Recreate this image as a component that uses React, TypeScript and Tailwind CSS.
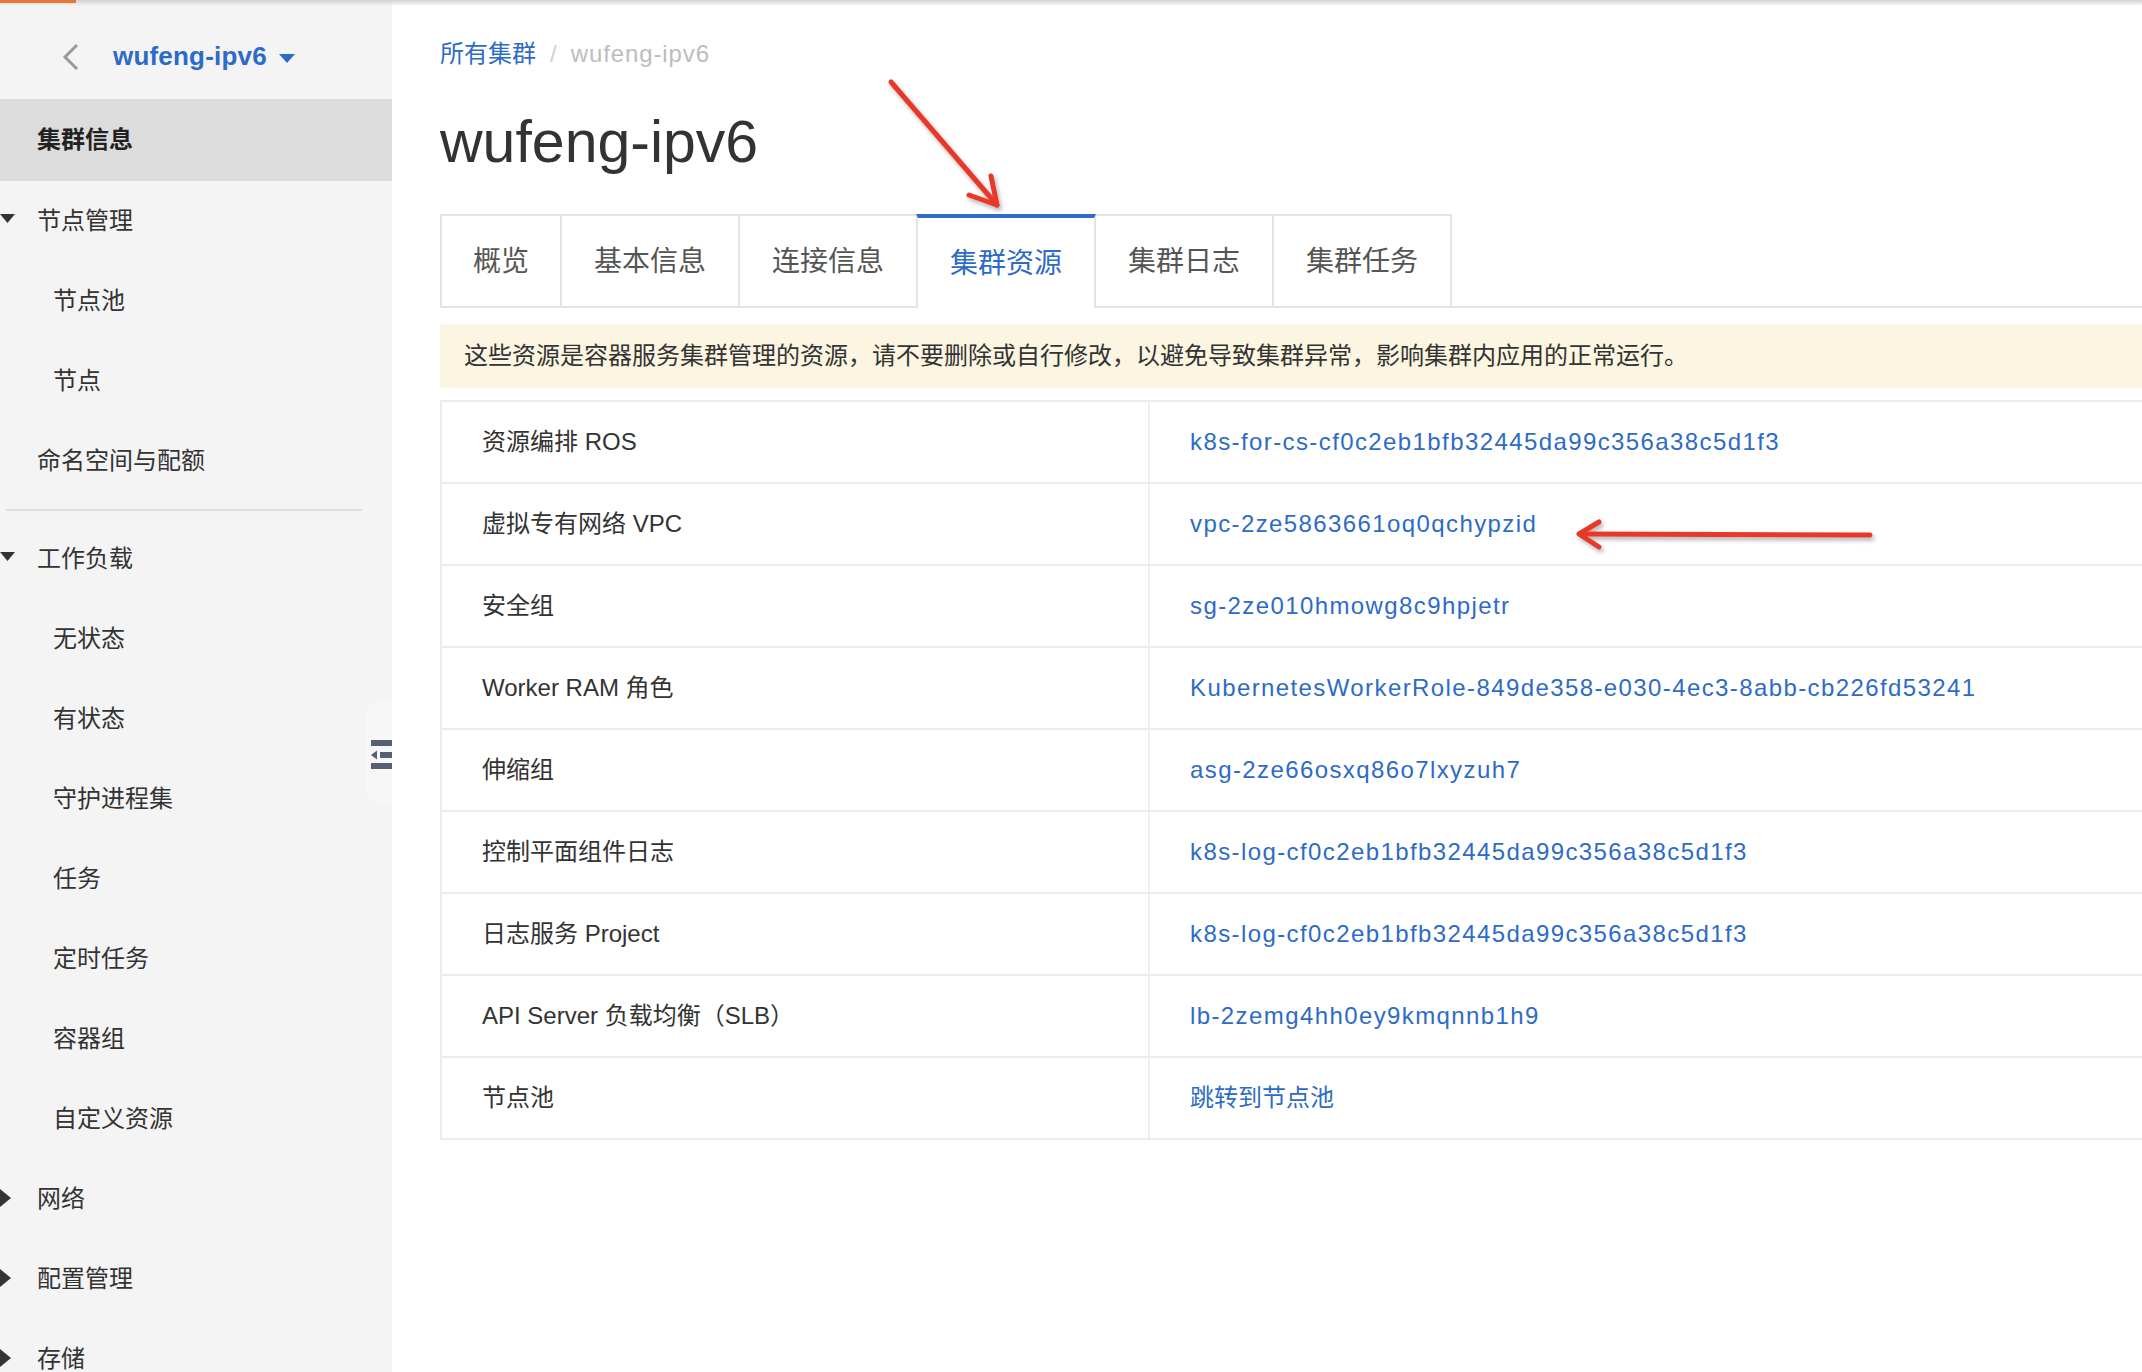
import React from "react";

type MenuItem =
  | { kind: "divider" }
  | {
      kind: "item";
      label: string;
      sub?: boolean;
      active?: boolean;
      caret?: "down" | "right";
    };

const menu: MenuItem[] = [
  { kind: "item", label: "集群信息", active: true },
  { kind: "item", label: "节点管理", caret: "down" },
  { kind: "item", label: "节点池", sub: true },
  { kind: "item", label: "节点", sub: true },
  { kind: "item", label: "命名空间与配额" },
  { kind: "divider" },
  { kind: "item", label: "工作负载", caret: "down" },
  { kind: "item", label: "无状态", sub: true },
  { kind: "item", label: "有状态", sub: true },
  { kind: "item", label: "守护进程集", sub: true },
  { kind: "item", label: "任务", sub: true },
  { kind: "item", label: "定时任务", sub: true },
  { kind: "item", label: "容器组", sub: true },
  { kind: "item", label: "自定义资源", sub: true },
  { kind: "item", label: "网络", caret: "right" },
  { kind: "item", label: "配置管理", caret: "right" },
  { kind: "item", label: "存储", caret: "right" },
];

const tabs = ["概览", "基本信息", "连接信息", "集群资源", "集群日志", "集群任务"];

const resources = [
  ["资源编排 ROS", "k8s-for-cs-cf0c2eb1bfb32445da99c356a38c5d1f3"],
  ["虚拟专有网络 VPC", "vpc-2ze5863661oq0qchypzid"],
  ["安全组", "sg-2ze010hmowg8c9hpjetr"],
  ["Worker RAM 角色", "KubernetesWorkerRole-849de358-e030-4ec3-8abb-cb226fd53241"],
  ["伸缩组", "asg-2ze66osxq86o7lxyzuh7"],
  ["控制平面组件日志", "k8s-log-cf0c2eb1bfb32445da99c356a38c5d1f3"],
  ["日志服务 Project", "k8s-log-cf0c2eb1bfb32445da99c356a38c5d1f3"],
  ["API Server 负载均衡（SLB）", "lb-2zemg4hh0ey9kmqnnb1h9"],
  ["节点池", "跳转到节点池"],
];

function Sidebar() {
  return (
    <aside className="relative w-[392px] shrink-0 bg-[#f4f4f4]">
      {/* cluster switcher */}
      <div className="flex h-[99px] items-center pl-[62px] pt-[14px]">
        <svg width="18" height="28" viewBox="0 0 18 28">
          <path d="M15 2 L3 14 L15 26" fill="none" stroke="#9a9a9a" strokeWidth="3" />
        </svg>
        <span className="ml-[33px] text-[26px] font-bold tracking-[0.2px] text-[#2d6bc7]">wufeng-ipv6</span>
        <svg className="ml-[12px] mt-[4px]" width="16" height="9" viewBox="0 0 16 9">
          <path d="M0 0 H16 L8 9 Z" fill="#2d6bc7" />
        </svg>
      </div>

      <nav className="flex flex-col">
        {menu.map((m, i) => {
          if (m.kind === "divider") {
            return (
              <div key={i} className="h-[18px] pt-[8px]">
                <div className="ml-[6px] h-[2px] w-[356px] bg-[#dedede]" />
              </div>
            );
          }
          return (
            <div
              key={i}
              className={`relative flex items-center text-[24px] ${
                m.active ? "h-[82px] bg-[#dcdcdc] font-bold text-[#222]" : "h-[80px] text-[#333]"
              } ${m.sub ? "pl-[53px]" : "pl-[37px]"}`}
            >
              {m.caret === "down" && (
                <svg className="absolute left-0 top-[33px]" width="15" height="9" viewBox="0 0 15 9">
                  <path d="M0 0 H15 L7.5 9 Z" fill="#333" />
                </svg>
              )}
              {m.caret === "right" && (
                <svg className="absolute left-0 top-[30px]" width="11" height="18" viewBox="0 0 11 18">
                  <path d="M0 0 L11 9 L0 18 Z" fill="#333" />
                </svg>
              )}
              {m.label}
            </div>
          );
        })}
      </nav>

      {/* collapse handle */}
      <div className="absolute left-[366px] top-[702px] h-[100px] w-[26px] rounded-l-[14px] bg-[#f7f7f7]">
        <svg className="absolute left-[5px] top-[38px]" width="21" height="29" viewBox="0 0 21 29">
          <rect x="0" y="0" width="21" height="6" fill="#566072" />
          <rect x="9" y="12" width="12" height="6" fill="#566072" />
          <path d="M0 15 L6 10.5 L6 19.5 Z" fill="#566072" />
          <rect x="0" y="23" width="21" height="6" fill="#566072" />
        </svg>
      </div>
    </aside>
  );
}

function Tabs() {
  return (
    <div className="flex h-[92px] items-end border-b-2 border-[#e3e3e3]">
      {tabs.map((t, i) => {
        const active = t === "集群资源";
        return (
          <div
            key={t}
            className={`flex items-center justify-center pt-[2px] text-[28px] ${
              i > 0 ? "-ml-[2px] px-[32px]" : "px-[31px]"
            } ${
              active
                ? "relative z-10 -mb-[2px] h-[94px] border-x-2 border-t-4 border-x-[#e3e3e3] border-t-[#2f6bc9] bg-white text-[#2d6bc7]"
                : "h-[92px] border-x-2 border-t-2 border-[#e3e3e3] text-[#555]"
            }`}
          >
            {t}
          </div>
        );
      })}
    </div>
  );
}

function ResourceTable() {
  return (
    <div className="mt-[12px] border-l-2 border-t-2 border-[#ececec]">
      {resources.map(([label, value]) => {
        const latin = /^[\x00-\x7f]+$/.test(value);
        return (
          <div key={label} className="flex h-[82px] border-b-2 border-[#ececec] text-[24px]">
            <div className="flex w-[708px] shrink-0 items-center border-r-2 border-[#efefef] pl-[40px] text-[#333]">
              {label}
            </div>
            <div
              className={`flex items-center pl-[40px] text-[#2d6bc7] ${latin ? "tracking-[1.4px]" : ""}`}
            >
              {value}
            </div>
          </div>
        );
      })}
    </div>
  );
}

function Annotations() {
  return (
    <svg
      className="pointer-events-none absolute left-0 top-0"
      width="2142"
      height="1372"
      viewBox="0 0 2142 1372"
    >
      <defs>
        <filter id="arrowShadow" x="-20%" y="-20%" width="140%" height="140%">
          <feDropShadow dx="2" dy="3" stdDeviation="2" floodColor="#000" floodOpacity="0.3" />
        </filter>
      </defs>
      <g
        filter="url(#arrowShadow)"
        fill="none"
        stroke="#e8392b"
        strokeWidth="5"
        strokeLinecap="round"
        strokeLinejoin="round"
      >
        <path d="M891 82 L997 205" />
        <path d="M991 176 L997 205 L969 195" />
        <path d="M1870 535 L1580 534" />
        <path d="M1599 522 L1579 534 L1599 547" />
      </g>
    </svg>
  );
}

export default function App() {
  return (
    <div className="relative flex h-[1372px] w-full overflow-hidden bg-white font-['Liberation_Sans','Noto_Sans_CJK_SC',sans-serif] text-[#333]">
      <div className="absolute left-0 top-0 z-20 h-[6px] w-full bg-linear-to-b from-[#d2d2d2] to-transparent" />
      <div className="absolute left-0 top-0 z-30 h-[3px] w-[76px] bg-[#e8763c]" />

      <Sidebar />

      <main className="min-w-0 flex-1 pl-[48px] pt-[38px]">
        <div className="flex h-[32px] items-center text-[24px] leading-[32px]">
          <span className="text-[#2d6bc7]">所有集群</span>
          <span className="mx-[14px] text-[#d0d0d0]">/</span>
          <span className="tracking-[0.9px] text-[#bdbdbd]">wufeng-ipv6</span>
        </div>

        <h1 className="mt-[39px] text-[59px] leading-[67px] font-normal text-[#333]">wufeng-ipv6</h1>

        <div className="mt-[40px]">
          <Tabs />
        </div>

        <div className="mt-[16px] flex h-[64px] items-center bg-[#fbf5e1] pl-[24px] text-[24px] text-[#333]">
          这些资源是容器服务集群管理的资源，请不要删除或自行修改，以避免导致集群异常，影响集群内应用的正常运行。
        </div>

        <ResourceTable />
      </main>

      <Annotations />
    </div>
  );
}
